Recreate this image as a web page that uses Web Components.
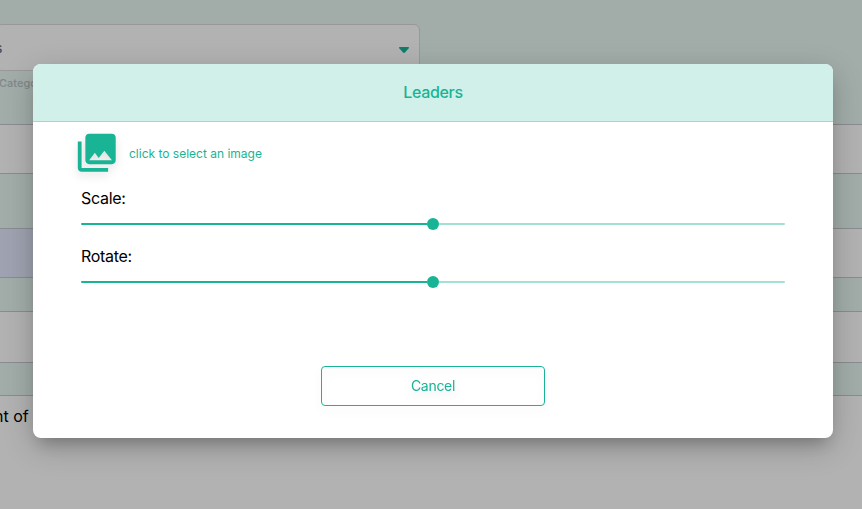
<!DOCTYPE html>
<html lang="en">
<head>
<meta charset="utf-8">
<title>Leaders</title>
<style>
html,body{margin:0;height:100%;overflow:hidden}
body{font-family:Inter,"Liberation Sans",sans-serif;color:#000}
</style>
</head>
<body>
<form-page></form-page>
<modal-layer>
  <image-dialog>
    <span slot="title">Leaders</span>
    <image-picker>click to select an image</image-picker>
    <range-field>Scale:</range-field>
    <range-field>Rotate:</range-field>
    <outline-button slot="actions">Cancel</outline-button>
  </image-dialog>
</modal-layer>
<script>
function define(name, html){
  const t=document.createElement('template');
  t.innerHTML=html;
  customElements.define(name, class extends HTMLElement{
    constructor(){
      super();
      this.attachShadow({mode:'open'}).append(t.content.cloneNode(true));
    }
  });
}

define('select-box', `<style>
:host{display:flex;box-sizing:border-box;width:424px;height:47px;margin-left:-4px;border:1px solid #d8dadd;border-radius:6px;background:#fff;align-items:center;justify-content:space-between;padding:0 10px 0 0;font-size:14px;color:#5b6478}
svg{display:block;margin-top:4px}
span{margin-left:-2px}
</style><span><slot></slot></span><svg width="10" height="6" viewBox="0 0 10 6"><path d="M.5 0h9q.7.5.2 1.2L6 5.5q-1 .9-2 0L.3 1.2Q-.2.5.5 0z" fill="#18b495"/></svg>`);

define('form-row', `<style>
:host{display:block;box-sizing:border-box;background:#fff;border:solid #c5c9ce;border-width:1px 0;height:var(--h);margin-bottom:var(--gap,0)}
:host([filled]){background:linear-gradient(90deg,#e4e9fc 50%,#fff 50%)}
:host([last]){border-bottom:0;flex:1;font-size:16px;line-height:20px;padding-top:10px}
::slotted(span){margin-left:-6px}
</style><slot></slot>`);

define('form-page', `<style>
:host{display:flex;flex-direction:column;height:509px;overflow:hidden;background:#e9f8f3;padding-top:24px;box-sizing:border-box}
.hint{height:53px;box-sizing:border-box;padding-top:4px;font-size:11px;line-height:16px;font-weight:500;color:#b9c3c7;flex:none;margin-left:-1px}
form-row{flex:none}
form-row[last]{flex:1}
</style>
<select-box>s</select-box>
<div class="hint">Category</div>
<form-row style="--h:50px;--gap:54px"></form-row>
<form-row filled style="--h:50px;--gap:33px"></form-row>
<form-row style="--h:52px;--gap:32px"></form-row>
<form-row last><span>nt of</span></form-row>`);

define('modal-layer', `<style>
:host{position:absolute;inset:0;background:rgba(0,0,0,.3);display:flex;justify-content:center;align-items:flex-start;padding:64px 0 0 4px;box-sizing:border-box}
</style><slot></slot>`);

define('image-dialog', `<style>
:host{display:flex;flex-direction:column;box-sizing:border-box;width:800px;height:374px;border-radius:8px;overflow:hidden;background:#fff;box-shadow:0 11px 15px -7px rgba(0,0,0,.2),0 9px 30px rgba(0,0,0,.22)}
header{height:58px;box-sizing:border-box;background:#d1f0e9;border-bottom:1px solid #c3c7d3;display:flex;align-items:center;justify-content:center;color:#18b495;font-size:16px;font-weight:500;line-height:24px;letter-spacing:-.32px;padding-bottom:2px}
main{padding:8px 48px 0;flex:1}
footer{display:flex;justify-content:center;padding-bottom:32px}
</style><header><slot name="title"></slot></header><main><slot></slot></main><footer><slot name="actions"></slot></footer>`);

define('image-picker', `<style>
:host{display:flex;align-items:center;height:45px;margin-left:-7px;gap:9.5px;color:#18b495;font-size:12px;line-height:18px}
svg{display:block;filter:drop-shadow(0 4px 4px rgba(0,0,0,.12));flex:none}
span{padding-top:2px}
</style><svg width="45.5" height="45.5" viewBox="0 0 24 24" fill="#18b495"><path d="M22 16V4c0-1.1-.9-2-2-2H8c-1.1 0-2 .9-2 2v12c0 1.1.9 2 2 2h12c1.1 0 2-.9 2-2zm-11-4l2.03 2.71L16 11l4 5H8l3-4zM2 6v14c0 1.1.9 2 2 2h14v-2H4V6H2z"/></svg><span><slot></slot></span>`);

define('range-field', `<style>
:host{display:block;height:58px;font-size:16px;line-height:24px;letter-spacing:-.3px}
label{display:block;padding-top:11px}
.track{display:grid;grid-template-columns:1fr 12px 1fr;align-items:center;height:12px;margin-top:8px}
i{height:2px;background:#18b495;border-radius:1px 0 0 1px}
b{height:12px;border-radius:50%;background:#18b495}
i.rest{background:#a3e1d5;border-radius:0 1px 1px 0}
</style><label><slot></slot></label><div class="track"><i></i><b></b><i class="rest"></i></div>`);

define('outline-button', `<style>
:host{display:flex;box-sizing:border-box;width:224px;height:40px;border:1px solid #18b495;border-radius:4px;align-items:center;justify-content:center;color:#18b495;font-size:14px;line-height:20px;letter-spacing:-.3px;filter:drop-shadow(0 4px 4px rgba(0,0,0,.1))}
</style><slot></slot>`);
</script>
</body>
</html>
